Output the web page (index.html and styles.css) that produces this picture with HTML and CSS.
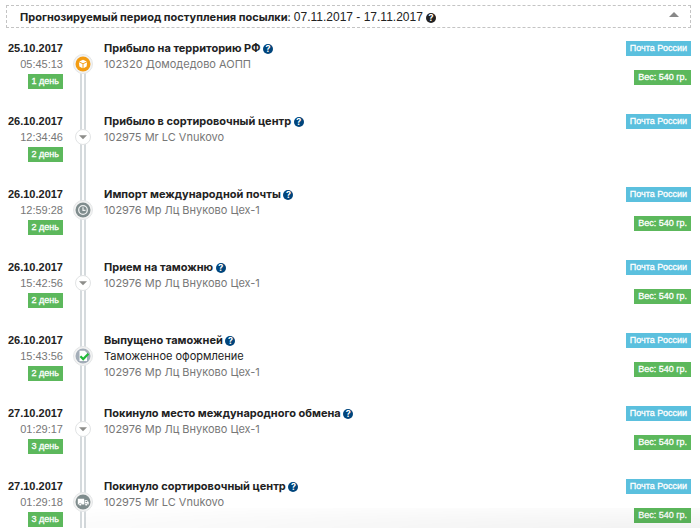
FILE: index.html
```
<!DOCTYPE html>
<html lang="ru">
<head>
    <meta charset="UTF-8">
    <meta name="viewport" content="width=device-width, initial-scale=1.0">
    <title>Отслеживание посылки</title>
    <link rel="stylesheet" href="styles.css">
</head>
<body>
    <div class="forecast">
        <p class="forecast-text"><strong>Прогнозируемый период поступления посылки</strong>: <span class="period">07.11.2017 - 17.11.2017</span> <button class="help help-dark" type="button">?</button></p>
        <button class="collapse" type="button" aria-label="Свернуть">
            <svg width="10" height="5" viewBox="0 0 10 5"><path d="M5 0l5 5H0z" fill="#888"/></svg>
        </button>
    </div>

    <ol class="timeline">
        <li class="event">
            <div class="when">
                <strong class="date">25.10.2017</strong>
                <span class="time">05:45:13</span>
                <span class="label label-green">1 день</span>
            </div>
            <div class="rail">
                <!-- посылка -->
                <svg class="marker" width="20" height="20" viewBox="0 0 20 20">
                    <circle cx="10" cy="10" r="9.5" fill="#f3f3f3" stroke="#e4e6e7"/>
                    <circle cx="10" cy="10" r="7.5" fill="#f39c12"/>
                    <path d="M10 5.8l3.8 1.7L10 9.3 6.2 7.5zM5.9 8.3l3.6 1.7v4.2l-3.1-1.6zM14.1 8.3L10.5 10v4.2l3.1-1.6z" fill="#fff"/>
                </svg>
            </div>
            <div class="what">
                <h2 class="title">Прибыло на территорию РФ <button class="help" type="button">?</button></h2>
                <p class="place">102320 Домодедово АОПП</p>
            </div>
            <div class="tags">
                <span class="label label-blue">Почта России</span>
                <span class="label label-green">Вес: 540 гр.</span>
            </div>
        </li>

        <li class="event">
            <div class="when">
                <strong class="date">26.10.2017</strong>
                <span class="time">12:34:46</span>
                <span class="label label-green">2 день</span>
            </div>
            <div class="rail">
                <svg class="marker" width="20" height="20" viewBox="0 0 20 20">
                    <circle cx="10" cy="10" r="7.5" fill="#fff" stroke="#e2e4e5"/>
                    <path d="M6 8.2h8l-4 4z" fill="#8d8d8a"/>
                </svg>
            </div>
            <div class="what">
                <h2 class="title">Прибыло в сортировочный центр <button class="help" type="button">?</button></h2>
                <p class="place">102975 Mr LC Vnukovo</p>
            </div>
            <div class="tags">
                <span class="label label-blue">Почта России</span>
            </div>
        </li>

        <li class="event">
            <div class="when">
                <strong class="date">26.10.2017</strong>
                <span class="time">12:59:28</span>
                <span class="label label-green">2 день</span>
            </div>
            <div class="rail">
                <!-- часы -->
                <svg class="marker" width="20" height="20" viewBox="0 0 20 20">
                    <circle cx="10" cy="10" r="9.5" fill="#f3f3f3" stroke="#e4e6e7"/>
                    <circle cx="10" cy="10" r="7.5" fill="#7f8c8d"/>
                    <circle cx="10" cy="10" r="4.3" fill="none" stroke="#eef0f0" stroke-width="1.3"/>
                    <path d="M10 7.3V10.3h2.5" fill="none" stroke="#eef0f0" stroke-width="1.2"/>
                </svg>
            </div>
            <div class="what">
                <h2 class="title">Импорт международной почты <button class="help" type="button">?</button></h2>
                <p class="place">102976 Мр Лц Внуково Цех-1</p>
            </div>
            <div class="tags">
                <span class="label label-blue">Почта России</span>
                <span class="label label-green">Вес: 540 гр.</span>
            </div>
        </li>

        <li class="event">
            <div class="when">
                <strong class="date">26.10.2017</strong>
                <span class="time">15:42:56</span>
                <span class="label label-green">2 день</span>
            </div>
            <div class="rail">
                <svg class="marker" width="20" height="20" viewBox="0 0 20 20">
                    <circle cx="10" cy="10" r="7.5" fill="#fff" stroke="#e2e4e5"/>
                    <path d="M6 8.2h8l-4 4z" fill="#8d8d8a"/>
                </svg>
            </div>
            <div class="what">
                <h2 class="title">Прием на таможню <button class="help" type="button">?</button></h2>
                <p class="place">102976 Мр Лц Внуково Цех-1</p>
            </div>
            <div class="tags">
                <span class="label label-blue">Почта России</span>
                <span class="label label-green">Вес: 540 гр.</span>
            </div>
        </li>

        <li class="event">
            <div class="when">
                <strong class="date">26.10.2017</strong>
                <span class="time">15:43:56</span>
                <span class="label label-green">2 день</span>
            </div>
            <div class="rail">
                <!-- документ с галочкой -->
                <svg class="marker" width="20" height="20" viewBox="0 0 20 20">
                    <circle cx="10" cy="10" r="9.5" fill="#f3f3f3" stroke="#e4e6e7"/>
                    <circle cx="10" cy="10" r="7.5" fill="#a3adb8"/>
                    <path d="M6.5 4.8h5.2l2.3 2.3v8H6.5z" fill="#fff"/>
                    <path d="M7.4 10.2l2.8 2.9 5.2-5.3" fill="none" stroke="#22b93a" stroke-width="2.2"/>
                </svg>
            </div>
            <div class="what">
                <h2 class="title">Выпущено таможней <button class="help" type="button">?</button></h2>
                <p class="note">Таможенное оформление</p>
                <p class="place">102976 Мр Лц Внуково Цех-1</p>
            </div>
            <div class="tags">
                <span class="label label-blue">Почта России</span>
                <span class="label label-green">Вес: 540 гр.</span>
            </div>
        </li>

        <li class="event">
            <div class="when">
                <strong class="date">27.10.2017</strong>
                <span class="time">01:29:17</span>
                <span class="label label-green">3 день</span>
            </div>
            <div class="rail">
                <svg class="marker" width="20" height="20" viewBox="0 0 20 20">
                    <circle cx="10" cy="10" r="7.5" fill="#fff" stroke="#e2e4e5"/>
                    <path d="M6 8.2h8l-4 4z" fill="#8d8d8a"/>
                </svg>
            </div>
            <div class="what">
                <h2 class="title">Покинуло место международного обмена <button class="help" type="button">?</button></h2>
                <p class="place">102976 Мр Лц Внуково Цех-1</p>
            </div>
            <div class="tags">
                <span class="label label-blue">Почта России</span>
                <span class="label label-green">Вес: 540 гр.</span>
            </div>
        </li>

        <li class="event">
            <div class="when">
                <strong class="date">27.10.2017</strong>
                <span class="time">01:29:18</span>
                <span class="label label-green">3 день</span>
            </div>
            <div class="rail">
                <!-- грузовик -->
                <svg class="marker" width="20" height="20" viewBox="0 0 20 20">
                    <circle cx="10" cy="10" r="9.5" fill="#f3f3f3" stroke="#e4e6e7"/>
                    <circle cx="10" cy="10" r="7.5" fill="#7f8c8d"/>
                    <path d="M4.8 6.8h6.4v5.6H4.8zM11.8 8h2.2l1.7 2v2.4h-3.9z" fill="#fff"/>
                    <circle cx="7.2" cy="12.6" r="1.3" fill="#fff" stroke="#7f8c8d" stroke-width=".6"/>
                    <circle cx="13.2" cy="12.6" r="1.3" fill="#fff" stroke="#7f8c8d" stroke-width=".6"/>
                    <path d="M12.5 8.7h1.2l1 1.3h-2.2z" fill="#7f8c8d"/>
                </svg>
            </div>
            <div class="what">
                <h2 class="title">Покинуло сортировочный центр <button class="help" type="button">?</button></h2>
                <p class="place">102975 Mr LC Vnukovo</p>
            </div>
            <div class="tags">
                <span class="label label-blue">Почта России</span>
                <span class="label label-green">Вес: 540 гр.</span>
            </div>
        </li>
    </ol>

    <div class="bottom-shade"></div>
</body>
</html>
```
FILE: styles.css
```
body {
    margin: 0;
    padding: 5px 9px 0 6px;
    font-family: Inter, "Liberation Sans", Arial, sans-serif;
    font-size: 11px;
    line-height: 16px;
    color: #222;
    background-color: #fff;
}

h2, p, ol {
    margin: 0;
    padding: 0;
    font-size: inherit;
}

button {
    padding: 0;
    border: none;
    background: none;
    font-family: inherit;
    cursor: pointer;
}

.forecast {
    display: flex;
    justify-content: space-between;
    align-items: flex-start;
    padding: 3px 11px 2px 13px;
    border: 1px dashed #c4c4c4;
}

.period {
    font-family: "Liberation Sans", Arial, sans-serif;
    font-size: 12px;
}

.collapse {
    display: flex;
    padding-top: 3px;
}

.help {
    width: 10px;
    height: 10px;
    border-radius: 50%;
    background-color: #00457c;
    color: #fff;
    font-size: 9px;
    font-weight: bold;
    line-height: 10px;
    text-align: center;
}

.help-dark {
    background-color: #222;
}

.timeline {
    list-style: none;
    padding-top: 12px;
}

.event {
    display: grid;
    grid-template-columns: 57px 40px 1fr auto;
    height: 73px;
}

.when {
    display: flex;
    flex-direction: column;
    align-items: flex-end;
    font-family: "Liberation Sans", Arial, sans-serif;
}

.time,
.place {
    color: #777;
}

.when .label {
    margin-top: 2px;
}

/* двойная линия между событиями */
.rail {
    position: relative;
    display: flex;
    justify-content: center;
    align-items: flex-start;
    padding-top: 14px;
}

.rail::before {
    content: "";
    position: absolute;
    top: 0;
    bottom: -14px;
    left: 17px;
    width: 2px;
    border-left: 2px solid #d5dadd;
    border-right: 2px solid #d5dadd;
}

.event:first-child .rail::before {
    top: 24px;
}

.marker {
    position: relative;
    z-index: 1;
}

.what {
    padding-left: 1px;
}

.tags {
    display: flex;
    flex-direction: column;
    align-items: flex-end;
    gap: 14px;
    padding-top: 1px;
}

.label {
    padding: 0 4px;
    color: #fff;
    font-family: "Liberation Sans", Arial, sans-serif;
    font-size: 9px;
    line-height: 15px;
    -webkit-text-stroke: 0.3px #fff;
}

.label-green {
    background-color: #5cb85c;
}

.label-blue {
    background-color: #5bc0de;
}

.bottom-shade {
    position: fixed;
    right: 0;
    bottom: 0;
    left: 84px;
    height: 20px;
    background: radial-gradient(ellipse at bottom right, rgba(0,0,0,0.05), rgba(0,0,0,0));
    pointer-events: none;
}
```
